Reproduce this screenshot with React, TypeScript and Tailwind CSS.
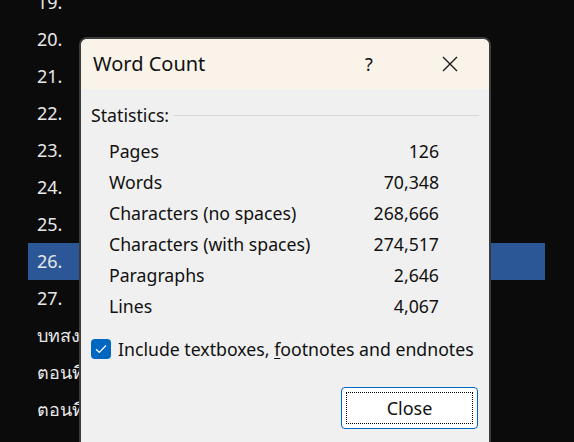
const rows = ["19.", "20.", "21.", "22.", "23.", "24.", "25.", "26.", "27.", "บทสง", "ตอนที่", "ตอนที่"];

const stats: [string, string][] = [
  ["Pages", "126"],
  ["Words", "70,348"],
  ["Characters (no spaces)", "268,666"],
  ["Characters (with spaces)", "274,517"],
  ["Paragraphs", "2,646"],
  ["Lines", "4,067"],
];

export default function App() {
  return (
    <div
      className="relative w-[574px] h-[442px] overflow-hidden bg-[#0b0b0b]"
      style={{ fontFamily: '"Noto Sans", "Open Sans", sans-serif' }}
    >
      {/* document list behind the dialog */}
      <div className="flex flex-col mt-[-16px] ml-[28px] w-[517px]">
        {rows.map((r, i) => (
          <div
            key={i}
            className={`h-[37px] flex items-center pl-[9px] text-[18px] text-[#e8e8e8] ${
              i === 7 ? "bg-[#2b5797]" : ""
            }`}
          >
            {r}
          </div>
        ))}
      </div>

      {/* dialog */}
      <div className="absolute left-[79px] top-[37px] w-[412px] h-[420px] rounded-t-[8px] border-2 border-[#3c3c3c] bg-[#f0f0f0] overflow-hidden text-[#111]">
        <div className="h-[50px] bg-[#f9f3e9] flex items-center pl-[12px]">
          <span className="text-[20px] flex-1">Word Count</span>
          <span className="text-[18px] w-[20px] text-center mr-[62px]">?</span>
          <svg width="18" height="18" viewBox="0 0 18 18" className="mr-[30px]">
            <path d="M2 2L16 16M16 2L2 16" stroke="#1a1a1a" strokeWidth="1.4" fill="none" />
          </svg>
        </div>

        <div className="px-[10px] text-[17.7px]">
          <div className="flex items-center mt-[13px]">
            <span>Statistics:</span>
            <div className="flex-1 h-px bg-[#d8d8d8] ml-[5px]" />
          </div>

          <div className="flex flex-col mt-[7px] pl-[18px] pr-[40px]">
            {stats.map(([k, v]) => (
              <div key={k} className="h-[31px] flex items-center justify-between">
                <span>{k}</span>
                <span>{v}</span>
              </div>
            ))}
          </div>

          <label className="flex items-center mt-[14px] gap-[7px]">
            <span className="w-[20px] h-[20px] rounded-[4px] bg-[#0067c0] flex items-center justify-center">
              <svg width="12" height="10" viewBox="0 0 12 10">
                <path d="M1 5.2L4.3 8.3L11 1.5" stroke="#fff" strokeWidth="1.2" fill="none" />
              </svg>
            </span>
            <span>
              Include textboxes, <span className="underline underline-offset-2">f</span>ootnotes and endnotes
            </span>
          </label>

          <div className="flex justify-end mt-[25px] pr-[1px]">
            <button className="w-[137px] h-[42px] rounded-[4px] border-[1.5px] border-[#0067c0] bg-white p-[4px]">
              <span className="flex w-full h-full items-center justify-center border border-dotted border-black text-[18px]">
                Close
              </span>
            </button>
          </div>
        </div>
      </div>
    </div>
  );
}
